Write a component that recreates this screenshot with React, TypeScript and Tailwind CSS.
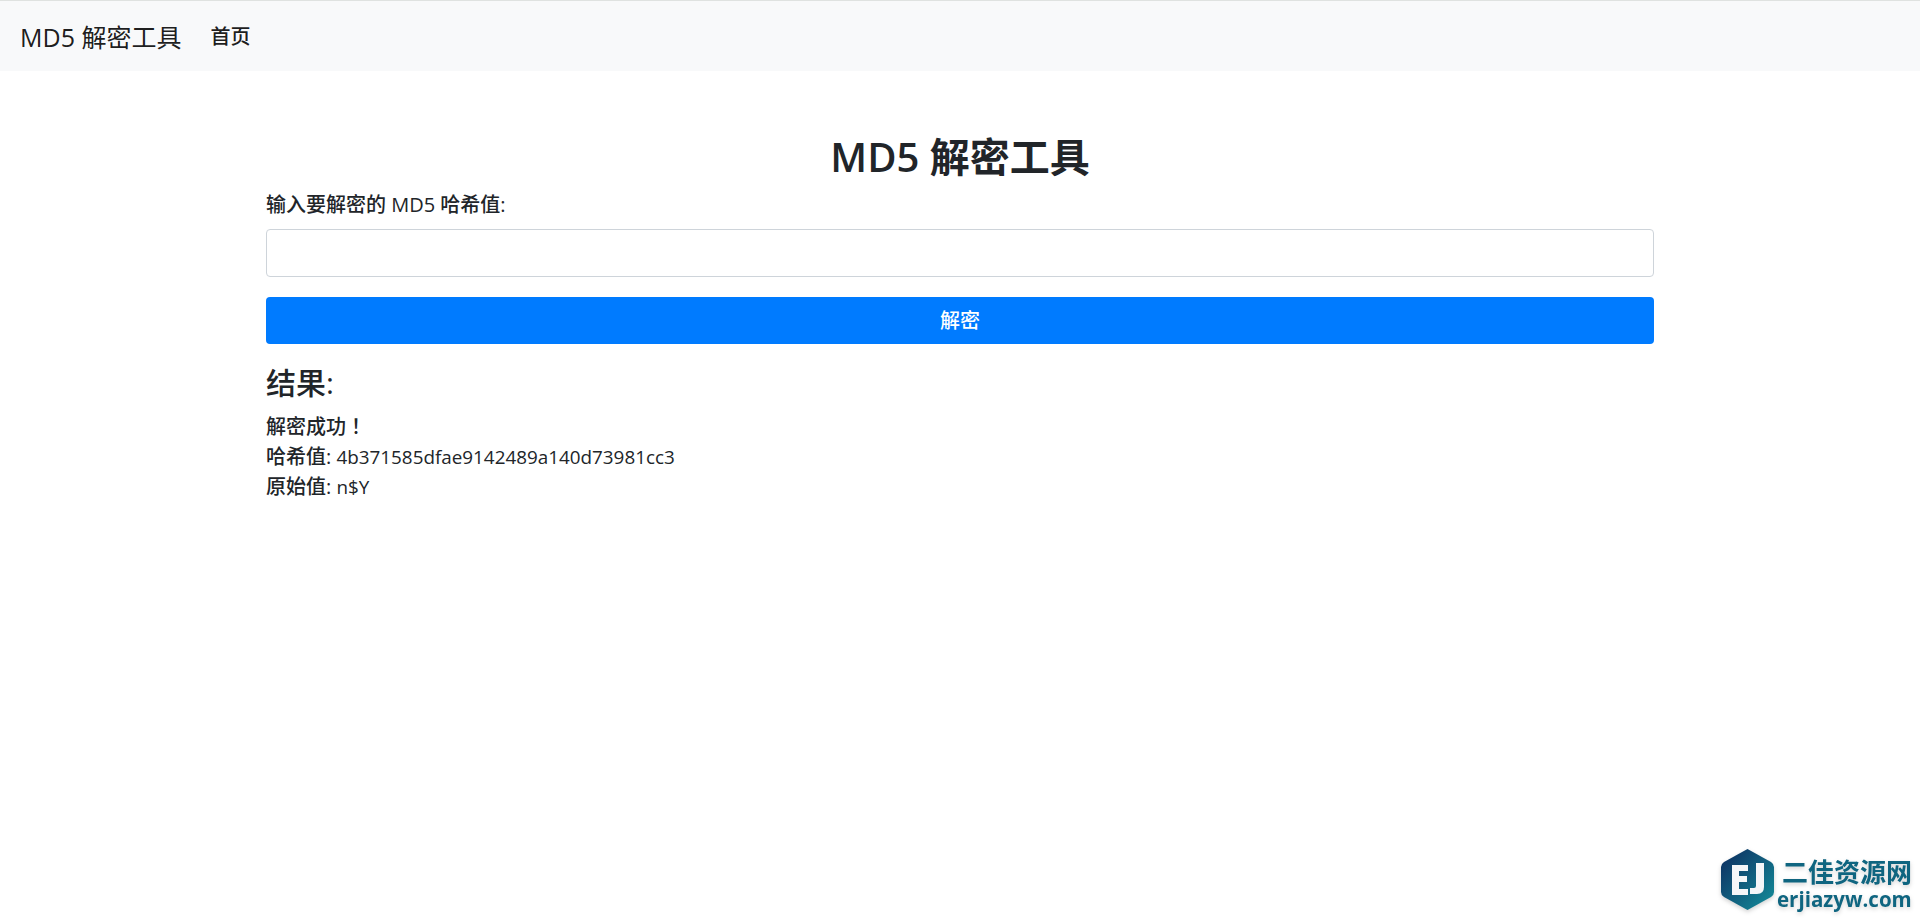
const pageFont = "font-['Open_Sans','Noto_Sans_CJK_SC',sans-serif]";

function Watermark() {
  return (
    <div className="absolute bottom-0 right-0 flex h-[92px] w-[220px] items-start pl-[21px] pt-[19px] drop-shadow-[0_2px_2px_rgba(0,0,0,0.18)]">
      <svg width="53" height="61" viewBox="0 0 53 61" className="shrink-0">
        <defs>
          <linearGradient id="ej" x1="0" y1="0" x2="1" y2="1">
            <stop offset="0" stopColor="#0d2a5e" />
            <stop offset="1" stopColor="#14909c" />
          </linearGradient>
        </defs>
        <path d="M26.5 0 L50 13 Q53 15 53 18 L53 43 Q53 46 50 48 L26.5 61 L3 48 Q0 46 0 43 L0 18 Q0 15 3 13 Z" fill="url(#ej)" />
        <path d="M11 16 H27 V22 H18 V27 H26 V33 H18 V40 H27 V46 H11 Z" fill="#f4f6f8" />
        <path d="M35 14 H43 V38 Q43 45 36 45 H29 V39 H33 Q35 39 35 37 Z" fill="#f4f6f8" />
      </svg>
      <div className="ml-[8px] flex flex-col font-['Noto_Sans_CJK_SC','Open_Sans',sans-serif] font-bold text-[#0f6580]">
        <span className="mt-[8px] text-[26px] leading-[28px] whitespace-nowrap">二佳资源网</span>
        <span className="ml-[-5px] mt-[2px] font-['Open_Sans',sans-serif] text-[20.5px] leading-[24px] whitespace-nowrap">erjiazyw.com</span>
      </div>
    </div>
  );
}

export default function App() {
  return (
    <div className={`relative h-[922px] overflow-hidden bg-white text-[20px] leading-[30px] text-[#212529] ${pageFont}`}>
      <nav className="flex h-[71px] items-center border-t border-[#dfe2e0] bg-[#f8f9fa] px-[20px] pt-[2px]">
        <a className="mr-[29px] text-[25px] leading-[38px] text-black/90">MD5 解密工具</a>
        <a className="text-[20px] font-medium text-black/90">首页</a>
      </nav>
      <main className="mx-auto w-[1388px] pt-[62px]">
        <h1 className="mb-[9px] text-center text-[40px] font-semibold leading-[48px]">MD5 解密工具</h1>
        <form>
          <div className="mb-[20px]">
            <label className="mb-[9px] block">
              <span className="font-medium">输入要解密的</span> MD5 <span className="font-medium">哈希值</span>:
            </label>
            <input type="text" className="block h-[48px] w-full rounded-[4px] border border-[#ced4da] bg-white px-[12px]" />
          </div>
          <button type="button" className="block h-[47px] w-full rounded-[4px] bg-[#007bff] text-center font-medium text-white">解密</button>
        </form>
        <div className="mt-[21px]">
          <h3 className="mb-[10px] text-[30px] font-medium leading-[36px]">结果:</h3>
          <p className="font-medium">解密成功<span className="font-['Noto_Sans_CJK_TC',sans-serif]">！</span></p>
          <p><strong className="font-medium">哈希值</strong>: <span className="text-[18.85px]">4b371585dfae9142489a140d73981cc3</span></p>
          <p><strong className="font-medium">原始值</strong>: <span className="text-[18.85px]">n$Y</span></p>
        </div>
      </main>
      <Watermark />
    </div>
  );
}
